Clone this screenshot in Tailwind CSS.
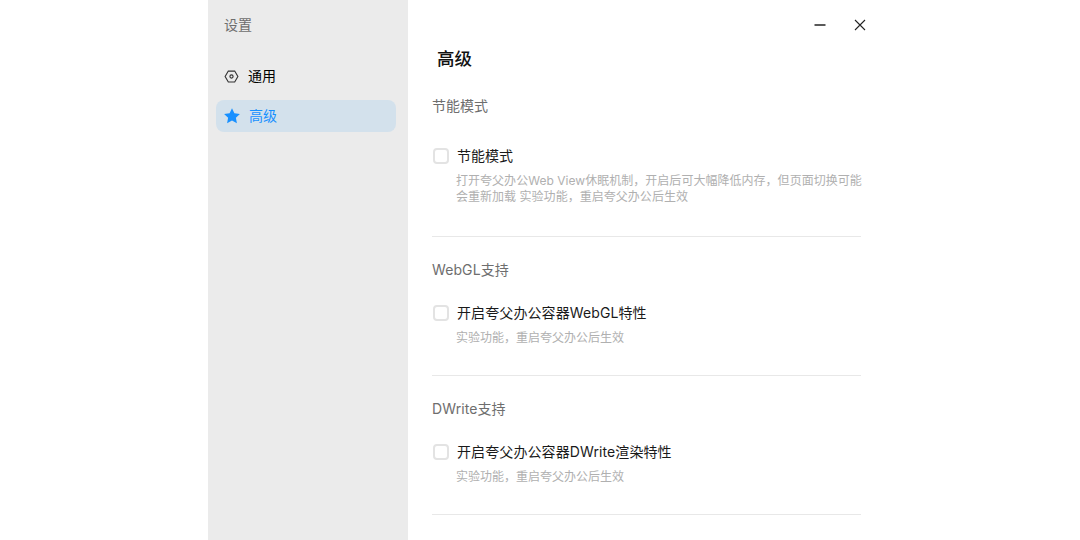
<!doctype html>
<html lang="zh-CN">
<head>
  <meta charset="utf-8" />
  <title>设置</title>
  <script src="https://cdn.jsdelivr.net/npm/@tailwindcss/browser@4"></script>
</head>
<body class="bg-white overflow-hidden font-['Inter','Noto_Sans_CJK_SC',sans-serif]">
  <div class="flex h-[540px] w-[672px] ml-[208px]">
    <!-- sidebar -->
    <aside class="w-[200px] shrink-0 bg-[#ebebeb] pl-2 pr-3">
      <div class="h-[51px] pl-2 pt-[15px] text-sm leading-[20px] text-[#6e6e6e]">设置</div>
      <nav class="mt-[9px] flex flex-col gap-2">
        <div class="flex h-8 items-center gap-[9px] rounded-lg pl-2 text-sm text-black">
          <svg class="size-[15px]" viewBox="0 0 16 16" fill="none" stroke="#333" stroke-width="1.2"><path d="M4.600 2.200h6.800L14.800 8l-3.400 5.800H4.600L1.200 8z"/><circle cx="8" cy="8" r="1.700"/></svg>
          <span>通用</span>
        </div>
        <div class="flex h-8 items-center gap-[9px] rounded-lg bg-[#d3e1ec] pl-2 text-sm text-[#1890ff]">
          <svg class="size-4" viewBox="0 0 16 16" fill="#1890ff"><path d="M8 .3l2.400 5 5.500.7-4 3.800 1 5.500L8 12.600l-4.900 2.700 1-5.500-4-3.800 5.500-.7z"/></svg>
          <span>高级</span>
        </div>
      </nav>
    </aside>

    <!-- main -->
    <main class="w-[453px] pl-6 relative">
      <div class="absolute right-[-19px] top-[5px] flex">
        <div class="flex size-10 items-center justify-center">
          <svg class="size-3" viewBox="0 0 12 12"><path d="M.5 6h11" stroke="#222" stroke-width="1.5"/></svg>
        </div>
        <div class="flex size-10 items-center justify-center">
          <svg class="size-3" viewBox="0 0 12 12"><path d="M1 1l10 10M11 1L1 11" stroke="#222" stroke-width="1.1"/></svg>
        </div>
      </div>

      <h1 class="pl-[5px] pt-[46px] text-[17.500px] leading-[26px] font-medium text-[#111]">高级</h1>

      <section class="h-[142px] border-b border-[#e8e8e8] mt-[23px] w-[429px]">
        <h2 class="text-sm leading-[22px] text-[#6e6e6e]">节能模式</h2>
        <div class="mt-[28px] flex items-center gap-2 pl-px">
          <span class="size-4 rounded-[4px] border-2 border-[#e3e3e3] bg-white"></span>
          <span class="text-sm leading-[22px] text-[#1a1a1a]">节能模式</span>
        </div>
        <p class="mt-[6px] pl-6 w-[432px] text-xs leading-[16px] tracking-[0.03px] text-[#b0b0b0]">打开夸父办公Web View休眠机制，开启后可大幅降低内存，但页面切换可能会重新加载 实验功能，重启夸父办公后生效</p>
      </section>

      <section class="h-[139px] border-b border-[#e8e8e8] w-[429px] pt-[22px]">
        <h2 class="text-sm leading-[22px] tracking-[0.1px] text-[#6e6e6e]">WebGL支持</h2>
        <div class="mt-[21px] flex items-center gap-2 pl-px">
          <span class="size-4 rounded-[4px] border-2 border-[#e3e3e3] bg-white"></span>
          <span class="text-sm leading-[22px] tracking-[0.1px] text-[#1a1a1a]">开启夸父办公容器WebGL特性</span>
        </div>
        <p class="mt-[6px] pl-6 text-xs leading-[16px] text-[#b0b0b0]">实验功能，重启夸父办公后生效</p>
      </section>

      <section class="h-[139px] border-b border-[#e8e8e8] w-[429px] pt-[22px]">
        <h2 class="text-sm leading-[22px] tracking-[0.1px] text-[#6e6e6e]">DWrite支持</h2>
        <div class="mt-[21px] flex items-center gap-2 pl-px">
          <span class="size-4 rounded-[4px] border-2 border-[#e3e3e3] bg-white"></span>
          <span class="text-sm leading-[22px] tracking-[0.1px] text-[#1a1a1a]">开启夸父办公容器DWrite渲染特性</span>
        </div>
        <p class="mt-[6px] pl-6 text-xs leading-[16px] text-[#b0b0b0]">实验功能，重启夸父办公后生效</p>
      </section>
    </main>
  </div>
</body>
</html>
